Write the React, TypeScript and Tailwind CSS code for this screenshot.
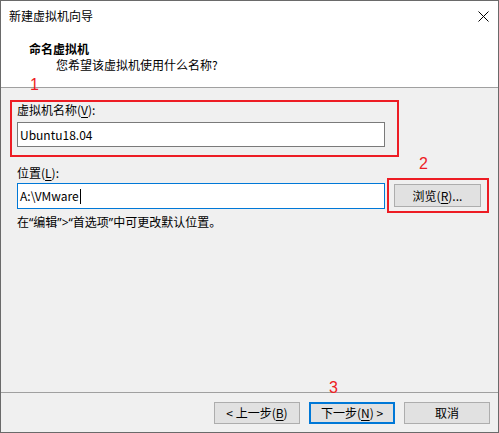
import React from "react";

const F = { fontFamily: '"Noto Sans CJK SC", "Noto Sans", sans-serif' };
const Q = { fontFamily: '"Noto Sans", "Liberation Sans", sans-serif' };

function U({ c }: { c: string }) {
  return <span className="underline underline-offset-[2px]">{c}</span>;
}

export default function App() {
  return (
    <div
      className="relative w-[499px] h-[433px] border border-[#6a6a6a] bg-[#f0f0f0] flex flex-col text-[12px] leading-[16px] text-black overflow-hidden"
      style={F}
    >
      {/* white top area */}
      <div className="bg-white border-b border-[#a0a0a0] h-[87px] flex flex-col">
        <div className="h-[30px] flex items-center justify-between pl-[8px] pr-[9px]">
          <span>新建虚拟机向导</span>
          <svg width="11" height="11" viewBox="0 0 11 11" className="mt-[1px]">
            <path d="M0.5 0.5 L10.5 10.5 M10.5 0.5 L0.5 10.5" stroke="#000" strokeWidth="1" fill="none" />
          </svg>
        </div>
        <div className="pl-[28px] pt-[10px] font-bold">命名虚拟机</div>
        <div className="pl-[55px] pt-[0px]">您希望该虚拟机使用什么名称?</div>
      </div>

      {/* body */}
      <div className="flex-1 flex flex-col pl-[16px] pr-[12px]">
        <div className="mt-[14px]">
          虚拟机名称(<U c="V" />):
        </div>
        <div className="mt-[4px] w-[368px] h-[25px] border border-[#7a7a7a] bg-white flex items-center pl-[2px]">
          Ubuntu18.04
        </div>
        <div className="mt-[18px]">
          位置(<U c="L" />):
        </div>
        <div className="mt-[2px] flex items-start gap-[9px]">
          <div className="w-[368px] h-[26px] border border-[#0078d7] bg-white flex items-center pl-[2px]">
            <span>A:\VMware</span>
            <span className="inline-block w-[1px] h-[15px] bg-black ml-[1px]" />
          </div>
          <div className="mt-[1px] w-[87px] h-[23px] border border-[#adadad] bg-[#e1e1e1] flex items-center justify-center">
            <span>
              浏览(<U c="R" />)...
            </span>
          </div>
        </div>
        <div className="mt-[5px]">
          在<span style={Q}>“</span>编辑<span style={Q}>”&gt;“</span>首选项<span style={Q}>”</span>中可更改默认位置。
        </div>
      </div>

      {/* footer */}
      <div className="border-t border-[#a0a0a0] h-[40px] flex items-start justify-end gap-[9px] pr-[8px] pt-[9px]">
        <div className="w-[86px] h-[22px] border border-[#adadad] bg-[#e1e1e1] flex items-center justify-center">
          <span>
            &lt; 上一步(<U c="B" />)
          </span>
        </div>
        <div className="w-[86px] h-[22px] border-2 border-[#0078d7] bg-[#e1e1e1] flex items-center justify-center">
          <span>
            下一步(<U c="N" />) &gt;
          </span>
        </div>
        <div className="w-[86px] h-[22px] border border-[#adadad] bg-[#e1e1e1] flex items-center justify-center">
          <span>取消</span>
        </div>
      </div>

      {/* annotations */}
      <div
        className="absolute left-[29px] top-[76px] text-[16px] leading-[16px] text-[#ed1c24]"
        style={{ fontFamily: '"Liberation Sans", Arial, sans-serif' }}
      >
        1
      </div>
      <div className="absolute left-[9px] top-[99px] w-[389px] h-[57px] border-2 border-[#ed1c24]" />
      <div
        className="absolute left-[418px] top-[155px] text-[16px] leading-[16px] text-[#ed1c24]"
        style={{ fontFamily: '"Liberation Sans", Arial, sans-serif' }}
      >
        2
      </div>
      <div className="absolute left-[386px] top-[177px] w-[102px] h-[35px] border-2 border-[#ed1c24]" />
      <div
        className="absolute left-[328px] top-[379px] text-[16px] leading-[16px] text-[#ed1c24]"
        style={{ fontFamily: '"Liberation Sans", Arial, sans-serif' }}
      >
        3
      </div>
    </div>
  );
}
